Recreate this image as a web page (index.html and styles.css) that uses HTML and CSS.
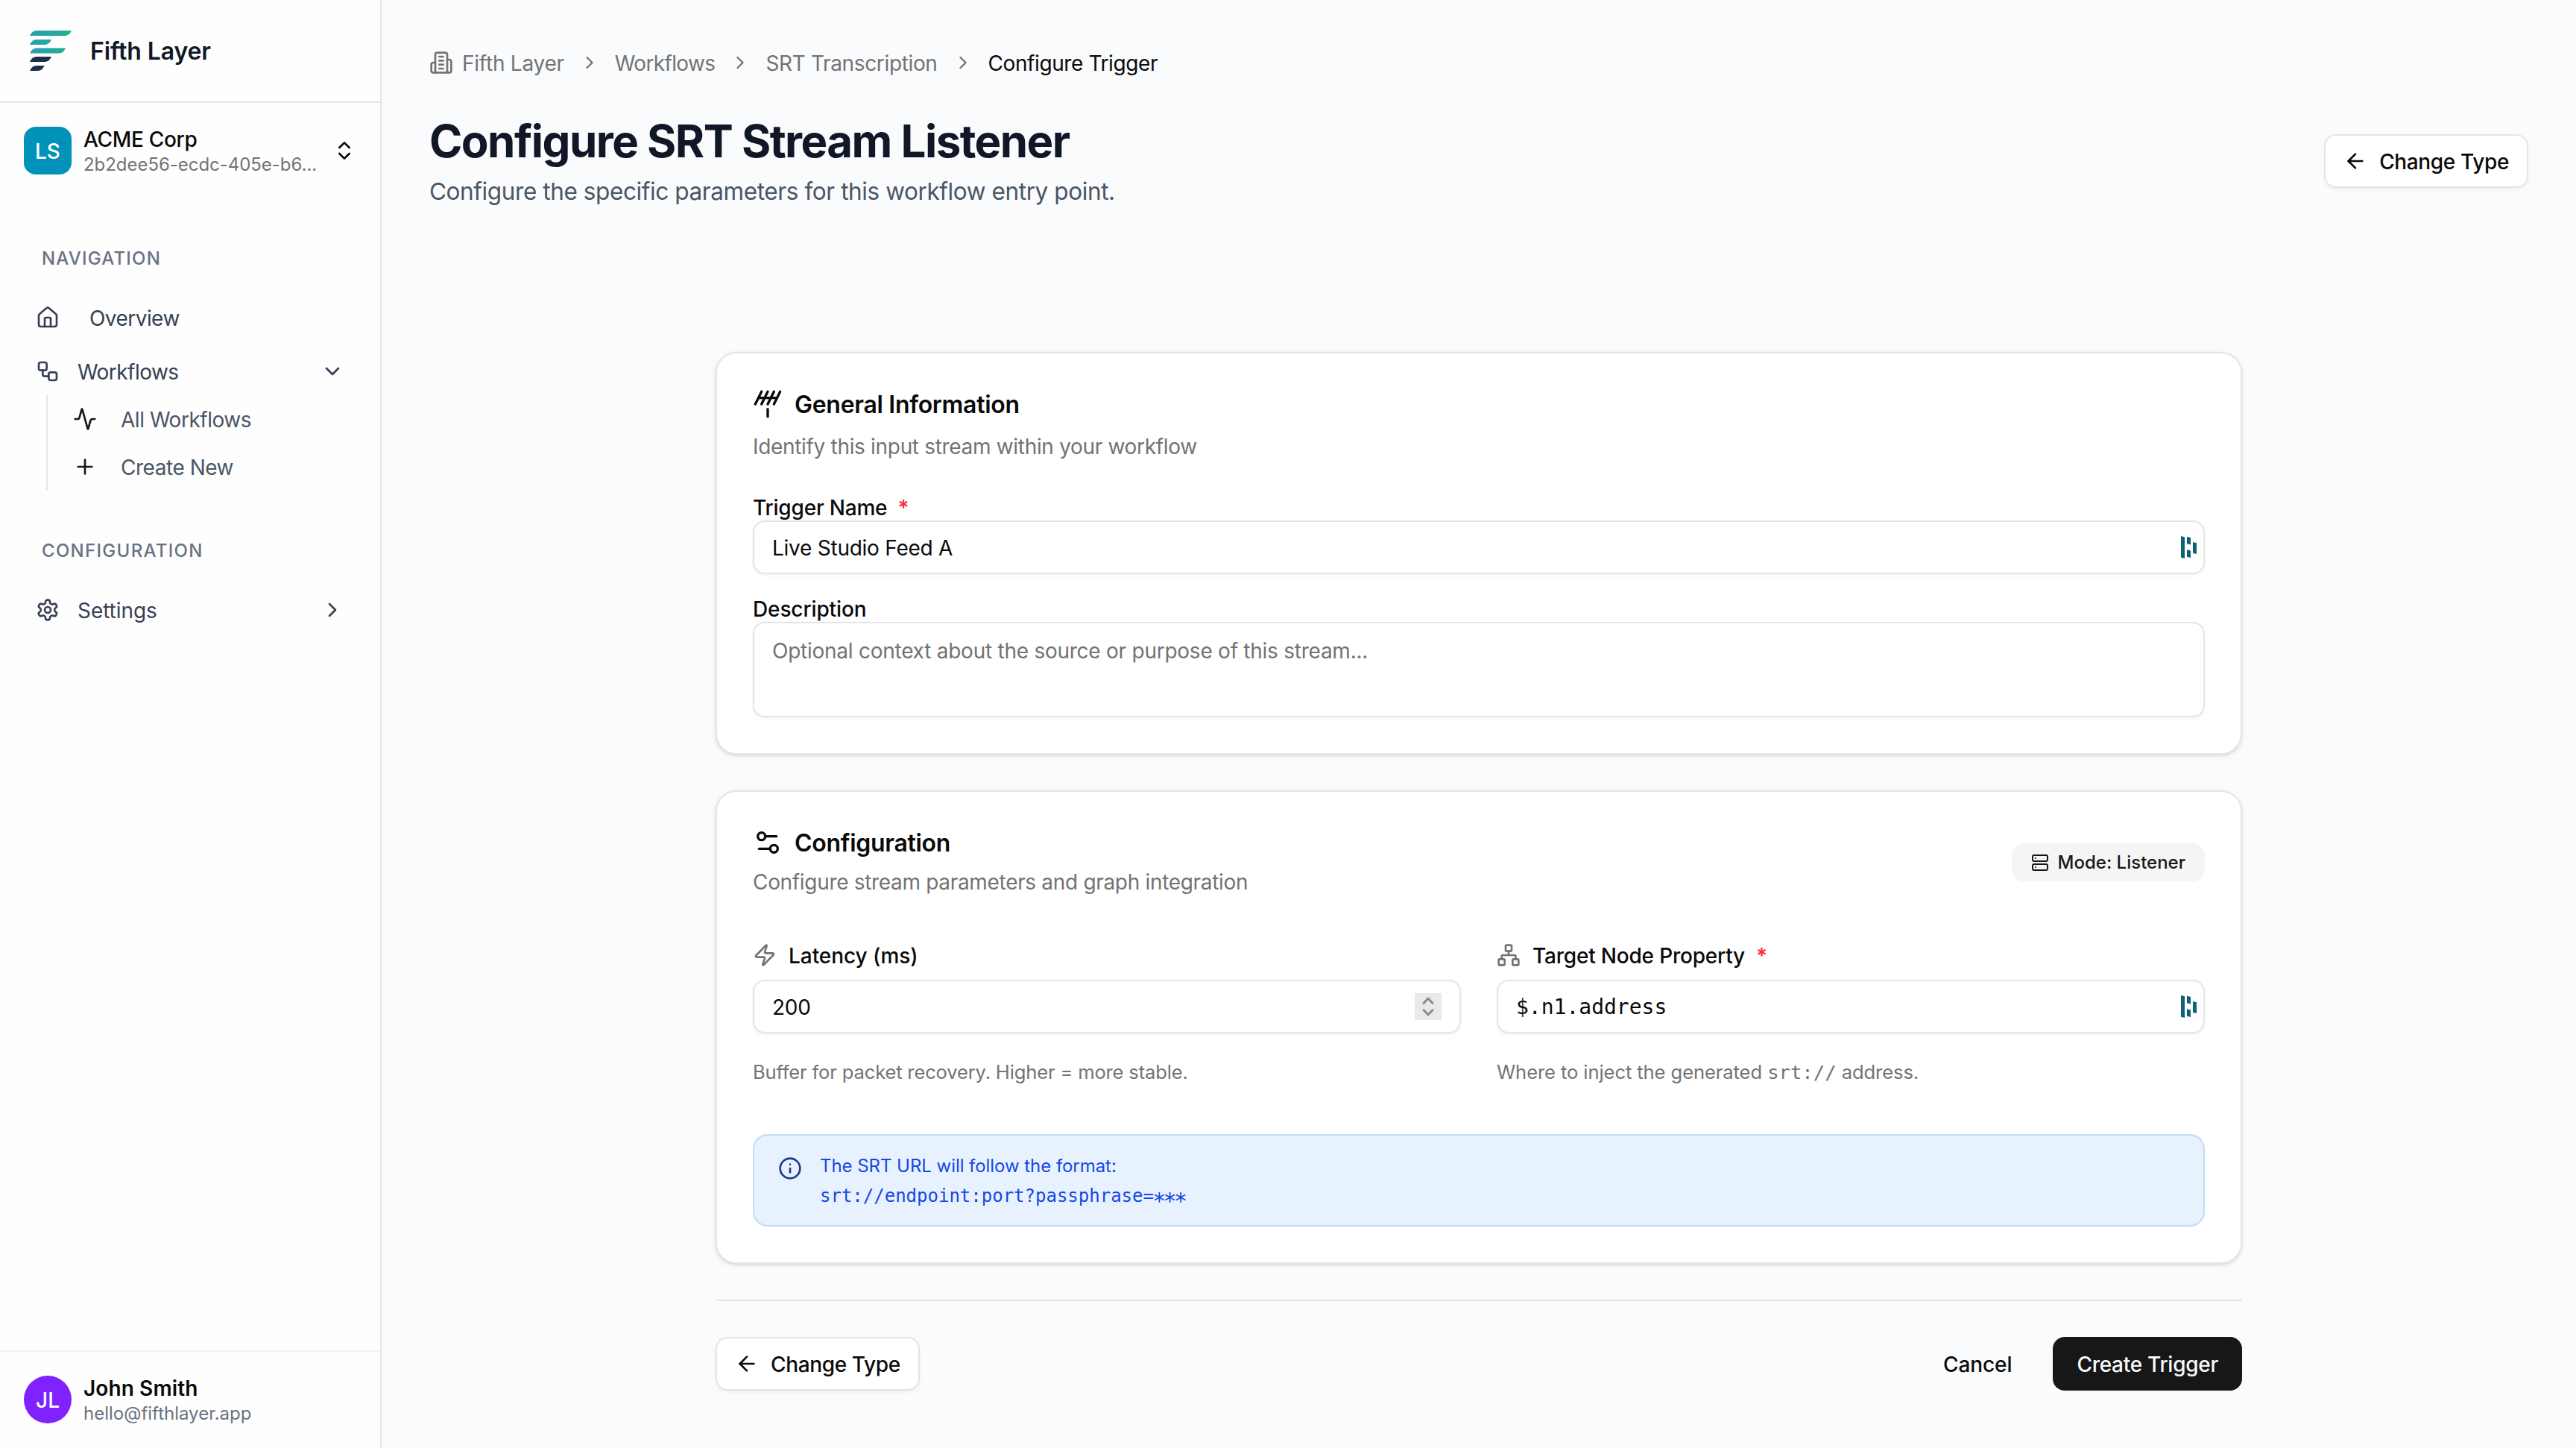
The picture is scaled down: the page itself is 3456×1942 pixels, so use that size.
FILE: index.html
```html
<!DOCTYPE html>
<html lang="en">
<head>
<meta charset="utf-8">
<title>Configure SRT Stream Listener</title>
<link rel="stylesheet" href="styles.css">
</head>
<body>
<div class="app">
  <aside class="sidebar">
    <div class="brand">
      <svg class="brand-logo" viewBox="0 0 56 54">
        <defs>
          <linearGradient id="teal" gradientUnits="userSpaceOnUse" x1="0" y1="0" x2="56" y2="0"><stop offset="0" stop-color="#2a9db0"/><stop offset="1" stop-color="#1eb28f"/></linearGradient>
        </defs>
        <g fill="url(#teal)">
          <path d="M0 7Q3 0 9 0H56Q53 7 47 7Z"/>
          <path d="M0 19Q3 12 9 12H29Q26 19 20 19Z"/>
          <path d="M0 30.500Q3 23.500 9 23.500H48Q45 30.500 39 30.500Z"/>
        </g>
        <g fill="#1b2e4a">
          <path d="M0 42Q3 35 9 35H29Q26 42 20 42Z"/>
          <path d="M0 54Q3 47 9 47H19.500Q16.500 54 11 54Z"/>
        </g>
      </svg>
      <span class="brand-name">Fifth Layer</span>
    </div>
    <div class="account">
      <div class="avatar avatar-org">LS</div>
      <div class="account-text">
        <div class="account-name">ACME Corp</div>
        <div class="account-id">2b2dee56-ecdc-405e-b6...</div>
      </div>
      <svg class="icon account-toggle" viewBox="0 0 24 24"><path d="m7 15 5 5 5-5"/><path d="m7 9 5-5 5 5"/></svg>
    </div>
    <nav class="nav">
      <div class="nav-label nav-label-main">NAVIGATION</div>
      <a class="nav-item nav-item-wide">
        <svg class="icon" viewBox="0 0 24 24"><path d="M15 21v-8a1 1 0 0 0-1-1h-4a1 1 0 0 0-1 1v8"/><path d="M3 10a2 2 0 0 1 .709-1.528l7-5.999a2 2 0 0 1 2.582 0l7 5.999A2 2 0 0 1 21 10v9a2 2 0 0 1-2 2H5a2 2 0 0 1-2-2z"/></svg>
        <span>Overview</span>
      </a>
      <a class="nav-item">
        <svg class="icon" viewBox="0 0 24 24"><rect width="8" height="8" x="3" y="3" rx="2"/><path d="M7 11v4a2 2 0 0 0 2 2h4"/><rect width="8" height="8" x="13" y="13" rx="2"/></svg>
        <span>Workflows</span>
        <svg class="icon nav-arrow" viewBox="0 0 24 24"><path d="m6 9 6 6 6-6"/></svg>
      </a>
      <div class="subnav">
        <a class="subnav-item">
          <svg class="icon" viewBox="0 0 24 24"><path d="M22 12h-2.480a2 2 0 0 0-1.930 1.460l-2.350 8.360a.25.25 0 0 1-.48 0L9.240 2.180a.25.25 0 0 0-.48 0l-2.350 8.360A2 2 0 0 1 4.490 12H2"/></svg>
          <span>All Workflows</span>
        </a>
        <a class="subnav-item">
          <svg class="icon" viewBox="0 0 24 24"><path d="M5 12h14"/><path d="M12 5v14"/></svg>
          <span>Create New</span>
        </a>
      </div>
      <div class="nav-label nav-label-config">CONFIGURATION</div>
      <a class="nav-item nav-item-settings">
        <svg class="icon" viewBox="0 0 24 24"><path d="M12.220 2h-.44a2 2 0 0 0-2 2v.18a2 2 0 0 1-1 1.730l-.43.25a2 2 0 0 1-2 0l-.15-.08a2 2 0 0 0-2.730.73l-.22.38a2 2 0 0 0 .73 2.730l.15.1a2 2 0 0 1 1 1.720v.51a2 2 0 0 1-1 1.740l-.15.09a2 2 0 0 0-.73 2.730l.22.38a2 2 0 0 0 2.730.73l.15-.08a2 2 0 0 1 2 0l.43.25a2 2 0 0 1 1 1.730V20a2 2 0 0 0 2 2h.44a2 2 0 0 0 2-2v-.18a2 2 0 0 1 1-1.730l.43-.25a2 2 0 0 1 2 0l.15.08a2 2 0 0 0 2.730-.73l.22-.39a2 2 0 0 0-.73-2.730l-.15-.08a2 2 0 0 1-1-1.740v-.5a2 2 0 0 1 1-1.740l.15-.09a2 2 0 0 0 .73-2.730l-.22-.38a2 2 0 0 0-2.730-.73l-.15.08a2 2 0 0 1-2 0l-.43-.25a2 2 0 0 1-1-1.730V4a2 2 0 0 0-2-2z"/><circle cx="12" cy="12" r="3"/></svg>
        <span>Settings</span>
        <svg class="icon nav-arrow" viewBox="0 0 24 24"><path d="m9 18 6-6-6-6"/></svg>
      </a>
    </nav>
    <div class="user">
      <div class="avatar avatar-user">JL</div>
      <div class="account-text">
        <div class="user-name">John Smith</div>
        <div class="user-email">hello@fifthlayer.app</div>
      </div>
    </div>
  </aside>

  <main class="main">
    <div class="breadcrumb">
      <svg class="icon crumb-icon" viewBox="0 0 24 24"><path d="M6 22V4a2 2 0 0 1 2-2h8a2 2 0 0 1 2 2v18Z"/><path d="M6 12H4a2 2 0 0 0-2 2v6a2 2 0 0 0 2 2h2"/><path d="M18 9h2a2 2 0 0 1 2 2v9a2 2 0 0 1-2 2h-2"/><path d="M10 6h4"/><path d="M10 10h4"/><path d="M10 14h4"/><path d="M10 18h4"/></svg>
      <span class="crumb-home">Fifth Layer</span>
      <svg class="icon crumb-sep" viewBox="0 0 24 24"><path d="m9 18 6-6-6-6"/></svg>
      <span class="crumb-section">Workflows</span>
      <svg class="icon crumb-sep" viewBox="0 0 24 24"><path d="m9 18 6-6-6-6"/></svg>
      <span class="crumb-workflow">SRT Transcription</span>
      <svg class="icon crumb-sep" viewBox="0 0 24 24"><path d="m9 18 6-6-6-6"/></svg>
      <span class="crumb-current">Configure Trigger</span>
    </div>

    <header class="page-header">
      <div>
        <h1 class="page-title">Configure SRT Stream Listener</h1>
        <p class="page-subtitle">Configure the specific parameters for this workflow entry point.</p>
      </div>
      <button class="btn btn-outline">
        <svg class="icon" viewBox="0 0 24 24"><path d="m12 19-7-7 7-7"/><path d="M19 12H5"/></svg>
        <span>Change Type</span>
      </button>
    </header>

    <div class="content">
      <section class="card">
        <div class="card-title">
          <svg class="icon icon-lg" viewBox="0 0 24 24"><path d="M2 12 7 2"/><path d="m7 12 5-10"/><path d="m12 12 5-10"/><path d="m17 12 5-10"/><path d="M4.500 7h15"/><path d="M12 16v6"/></svg>
          <span>General Information</span>
        </div>
        <div class="card-desc card-desc-general">Identify this input stream within your workflow</div>
        <div class="label label-name"><span>Trigger Name</span><span class="required">*</span></div>
        <div class="field">
          <span class="field-value">Live Studio Feed A</span>
          <svg class="vault-icon" viewBox="0 0 21 30"><path d="M0 0l5 1.300V30l-5-1.300z"/><path d="M8 .7l5 1.300v9.500l-5-1.300z"/><path d="M8 18.300l5 1.300V29l-5-1.300z"/><path d="M16 8l5 1.300V24l-5-1.300z"/></svg>
        </div>
        <div class="label label-desc"><span>Description</span></div>
        <div class="field field-area"><span class="placeholder">Optional context about the source or purpose of this stream...</span></div>
      </section>

      <section class="card card-config">
        <div class="card-head">
          <div>
            <div class="card-title">
              <svg class="icon icon-lg" viewBox="0 0 24 24"><path d="M14 17H5"/><path d="M19 7h-9"/><circle cx="17" cy="17" r="3"/><circle cx="7" cy="7" r="3"/></svg>
              <span>Configuration</span>
            </div>
            <div class="card-desc card-desc-config">Configure stream parameters and graph integration</div>
          </div>
          <div class="badge">
            <svg class="icon icon-sm" viewBox="0 0 24 24"><rect width="20" height="8" x="2" y="2" rx="2"/><rect width="20" height="8" x="2" y="14" rx="2"/><path d="M6 6h.01"/><path d="M6 18h.01"/></svg>
            <span>Mode: Listener</span>
          </div>
        </div>
        <div class="columns">
          <div>
            <div class="label label-icon">
              <svg class="icon" viewBox="0 0 24 24"><path d="M4 14a1 1 0 0 1-.78-1.630l9.900-10.200a.5.5 0 0 1 .86.46l-1.920 6.020A1 1 0 0 0 13 10h7a1 1 0 0 1 .78 1.630l-9.900 10.200a.5.5 0 0 1-.86-.46l1.920-6.020A1 1 0 0 0 11 14z"/></svg>
              <span class="label-latency">Latency (ms)</span>
            </div>
            <div class="field">
              <span class="field-value field-number">200</span>
              <div class="stepper"><svg viewBox="0 0 36 36"><path d="m12 13.500 6-6.500 6 6.500"/><path d="m12 22.500 6 6.500 6-6.500"/></svg></div>
            </div>
            <div class="hint hint-latency">Buffer for packet recovery. Higher = more stable.</div>
          </div>
          <div>
            <div class="label label-icon">
              <svg class="icon" viewBox="0 0 24 24"><rect x="16" y="16" width="6" height="6" rx="1"/><rect x="2" y="16" width="6" height="6" rx="1"/><rect x="9" y="2" width="6" height="6" rx="1"/><path d="M5 16v-3a1 1 0 0 1 1-1h12a1 1 0 0 1 1 1v3"/><path d="M12 12V8"/></svg>
              <span>Target Node Property</span><span class="required">*</span>
            </div>
            <div class="field">
              <span class="field-value mono">$.n1.address</span>
              <svg class="vault-icon" viewBox="0 0 21 30"><path d="M0 0l5 1.300V30l-5-1.300z"/><path d="M8 .7l5 1.300v9.500l-5-1.300z"/><path d="M8 18.300l5 1.300V29l-5-1.300z"/><path d="M16 8l5 1.300V24l-5-1.300z"/></svg>
            </div>
            <div class="hint">Where to inject the generated <code class="mono">srt://</code> address.</div>
          </div>
        </div>
        <div class="notice">
          <svg class="icon" viewBox="0 0 24 24"><circle cx="12" cy="12" r="10"/><path d="M12 16v-4"/><path d="M12 8h.01"/></svg>
          <div class="notice-text">
            <div class="notice-line">The SRT URL will follow the format:</div>
            <div class="mono">srt://endpoint:port?passphrase=<b class="mask">***</b></div>
          </div>
        </div>
      </section>

      <div class="actions">
        <button class="btn btn-outline">
          <svg class="icon" viewBox="0 0 24 24"><path d="m12 19-7-7 7-7"/><path d="M19 12H5"/></svg>
          <span>Change Type</span>
        </button>
        <div class="actions-right">
          <button class="btn btn-ghost"><span>Cancel</span></button>
          <button class="btn btn-primary"><span>Create Trigger</span></button>
        </div>
      </div>
    </div>
  </main>
</div>
</body>
</html>
```
FILE: styles.css
```css
* { box-sizing: border-box; margin: 0; padding: 0; }
body { font-family: Inter, "Liberation Sans", sans-serif; font-size: 28px; line-height: 40px; color: #0a0a0a; background: #fafbfd; }
.app { display: flex; height: 1942px; }
.icon { width: 32px; height: 32px; flex: none; display: block; fill: none; stroke: currentColor; stroke-width: 2; stroke-linecap: round; stroke-linejoin: round; }
.icon-lg { width: 40px; height: 40px; }
.icon-sm { width: 24px; height: 24px; }
span, div { white-space: nowrap; }
span { padding-top: 2px; }

/* Sidebar */
.sidebar { width: 512px; flex: none; display: flex; flex-direction: column; background: #fefefe; border-right: 2px solid #e5e5e5; }
.brand { height: 138px; flex: none; display: flex; align-items: center; gap: 25px; padding-left: 40px; border-bottom: 2px solid #e5e5e5; }
.brand-logo { width: 56px; height: 54px; }
.brand-name { font-size: 32px; font-weight: 600; color: #101828; letter-spacing: -.12px; }
.account { height: 128px; display: flex; align-items: center; padding: 0 32px; gap: 16px; }
.avatar { width: 64px; height: 64px; flex: none; display: flex; align-items: center; justify-content: center; color: #fff; font-weight: 500; padding-top: 2px; }
.avatar-org { border-radius: 16px; background: #0092b8; }
.avatar-user { border-radius: 50%; background: #7f22fe; }
.account-text { flex: 1; padding-top: 2px; }
.account-name, .user-name { font-weight: 500; line-height: 35px; }
.account-name { letter-spacing: -.3px; }
.user-name { font-weight: 600; letter-spacing: .1px; }
.account-id, .user-email { font-size: 24px; line-height: 32px; }
.account-id { color: #737373; letter-spacing: -.04px; }
.user-email { color: #6a7282; }
.nav { padding: 48px 32px 0; }
.nav-label { height: 64px; display: flex; align-items: center; padding: 1px 0 0 24px; margin-bottom: 16px; font-size: 24px; font-weight: 500; color: #6a7282; letter-spacing: 1.2px; }
.nav-label-config { letter-spacing: 1.3px; }
.nav-item { height: 64px; display: flex; align-items: center; gap: 24px; padding: 0 16px; margin-bottom: 8px; color: #364153; letter-spacing: -.55px; }
.nav-item-wide { gap: 40px; }
.nav-item-settings { letter-spacing: -.05px; }
.nav-arrow { margin-left: auto; }
.subnav { margin: -8px 0 48px 30px; border-left: 2px solid #e5e5e5; }
.subnav-item { height: 64px; display: flex; align-items: center; gap: 32px; padding-left: 34px; color: #4a5565; letter-spacing: -.47px; }
.subnav-item .icon { color: #171717; }
.user { margin-top: auto; height: 131px; display: flex; align-items: center; gap: 16px; padding: 0 32px 1px; border-top: 2px solid #f3f4f6; }

/* Page */
.main { flex: 1; padding: 64px 64px 0; }
.breadcrumb { height: 40px; display: flex; align-items: center; color: #737373; }
.crumb-icon { margin-right: 12px; }
.crumb-sep { width: 28px; height: 28px; margin: 0 20px; }
.crumb-home { letter-spacing: -.25px; }
.crumb-section { letter-spacing: -.64px; }
.crumb-workflow { letter-spacing: -.36px; }
.crumb-current { color: #0a0a0a; letter-spacing: -.4px; }
.page-header { display: flex; align-items: center; justify-content: space-between; margin-top: 48px; height: 128px; }
.page-title { font-size: 60px; line-height: 74px; font-weight: 700; color: #101828; letter-spacing: -1.53px; }
.page-subtitle { font-size: 31.5px; line-height: 46px; margin-top: 8px; color: #4a5565; letter-spacing: -.4px; }

.btn { height: 72px; display: flex; align-items: center; gap: 16px; padding: 0 32px; border: 0; border-radius: 16px; font: 500 28px/40px Inter, "Liberation Sans", sans-serif; color: #0a0a0a; background: transparent; letter-spacing: -.1px; }
.btn-outline { padding: 0 24px; border: 2px solid #e5e5e5; background: #fff; box-shadow: 0 2px 4px rgba(0,0,0,.05); letter-spacing: -.36px; }
.btn-primary { background: #171717; color: #fafafa; letter-spacing: -.28px; }

/* Form */
.content { width: 2048px; margin: 192px auto 0; }
.card { background: #fff; border: 2px solid #e5e5e5; border-radius: 28px; padding: 48px; box-shadow: 0 2px 6px rgba(0,0,0,.1), 0 2px 4px -2px rgba(0,0,0,.1); }
.card-config { margin-top: 48px; }
.card-head { display: flex; align-items: center; justify-content: space-between; }
.card-title { display: flex; align-items: center; gap: 16px; font-size: 32px; font-weight: 600; height: 40px; letter-spacing: -.28px; }
.card-desc { color: #737373; letter-spacing: -.32px; }
.card-desc-general { margin-top: 17px; }
.card-desc-config { margin-top: 13px; }
.label { display: flex; align-items: center; height: 36px; font-weight: 500; letter-spacing: -.2px; }
.label-name { margin-top: 43px; }
.label-desc { margin-top: 28px; letter-spacing: -.12px; }
.label-icon { height: 40px; gap: 16px; margin-bottom: 13px; }
.label-latency { letter-spacing: -.05px; }
.label-icon .icon { color: #737373; }
.required { color: #fb2c36; margin-left: 14px; font-weight: 600; }
.label-icon .required { margin-left: -1px; }
.field { height: 72px; display: flex; align-items: center; padding: 0 9px 0 24px; background: #fff; border: 2px solid #e5e5e5; border-radius: 16px; box-shadow: 0 2px 4px rgba(0,0,0,.05); letter-spacing: -.25px; }
.field-value { flex: 1; }
.field-number { letter-spacing: -.3px; }
.field-area { height: 128px; align-items: flex-start; padding-top: 15px; letter-spacing: -.25px; }
.placeholder { color: #737373; }
.vault-icon { width: 21px; height: 30px; fill: #0e6175; }
.stepper { width: 36px; height: 36px; margin-right: 15px; background: #e9e9ec; }
.stepper svg { display: block; fill: none; stroke: #8c8c90; stroke-width: 3; stroke-linecap: round; stroke-linejoin: round; }
.badge { height: 51px; display: flex; align-items: center; gap: 12px; padding: 0 26px; border-radius: 16px; background: #f5f5f5; font-size: 24px; font-weight: 500; color: #171717; }
.badge span { padding-top: 1px; }
.columns { display: grid; grid-template-columns: 1fr 1fr; gap: 48px; margin-top: 58px; }
.hint { margin-top: 32px; font-size: 25.6px; color: #737373; letter-spacing: -.1px; }
.hint-latency { letter-spacing: -.18px; }
.hint code { font-size: inherit; }
.notice { height: 124px; display: flex; gap: 24px; margin-top: 63px; padding: 21px 32px 0; border: 2px solid #c3daf8; border-radius: 20px; background: #e8f2ff; color: #1447e6; font-size: 24px; }
.notice .icon { margin-top: 7px; color: #1c398e; }
.notice-line { letter-spacing: -.05px; }
.mono { font-family: "DejaVu Sans Mono", monospace; letter-spacing: 0; }
.mask { margin-left: -1.8px; font-size: 30px; font-weight: 400; line-height: 0; letter-spacing: -3.6px; vertical-align: -9px; }
.actions { display: flex; justify-content: space-between; margin-top: 48px; padding-top: 48px; border-top: 2px solid #e5e5e5; }
.actions-right { display: flex; gap: 23px; }
```
